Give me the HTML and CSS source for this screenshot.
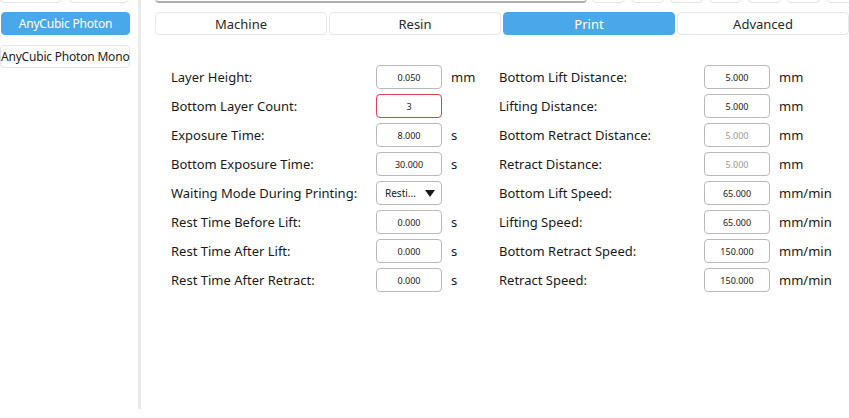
FILE: index.html
```html
<!DOCTYPE html>
<html lang="en">
<head>
    <meta charset="UTF-8">
    <title>Printer Settings</title>
    <link rel="stylesheet" href="styles.css">
</head>
<body>
    <div class="app">
        <div class="sidebar">
            <div class="side-top">
                <span class="stub"></span>
                <span class="stub wide"></span>
            </div>
            <button class="machine active">AnyCubic Photon</button>
            <button class="machine">AnyCubic Photon Mono</button>
        </div>

        <div class="main">
            <div class="toolbar">
                <span class="name-field"></span>
                <span class="tool"></span>
                <span class="tool"></span>
                <span class="tool"></span>
                <span class="tool"></span>
                <span class="tool"></span>
                <span class="tool"></span>
                <span class="tool"></span>
            </div>

            <div class="tabs">
                <button class="tab">Machine</button>
                <button class="tab">Resin</button>
                <button class="tab active">Print</button>
                <button class="tab">Advanced</button>
            </div>

            <div class="form">
                <div class="column">
                    <div class="row"><label>Layer Height:</label><input class="field" value="0.050"><span class="unit">mm</span></div>
                    <div class="row"><label>Bottom Layer Count:</label><input class="field invalid" value="3"><span class="unit"></span></div>
                    <div class="row"><label>Exposure Time:</label><input class="field" value="8.000"><span class="unit">s</span></div>
                    <div class="row"><label>Bottom Exposure Time:</label><input class="field" value="30.000"><span class="unit">s</span></div>
                    <div class="row">
                        <label>Waiting Mode During Printing:</label>
                        <div class="field select">
                            <span>Resti...</span>
                            <svg class="caret" width="10" height="7" viewBox="0 0 10 7"><path d="M0 0 H10 L5 7 Z" fill="#1a1a1a"/></svg>
                        </div>
                        <span class="unit"></span>
                    </div>
                    <div class="row"><label>Rest Time Before Lift:</label><input class="field" value="0.000"><span class="unit">s</span></div>
                    <div class="row"><label>Rest Time After Lift:</label><input class="field" value="0.000"><span class="unit">s</span></div>
                    <div class="row"><label>Rest Time After Retract:</label><input class="field" value="0.000"><span class="unit">s</span></div>
                </div>
                <div class="column">
                    <div class="row"><label>Bottom Lift Distance:</label><input class="field" value="5.000"><span class="unit">mm</span></div>
                    <div class="row"><label>Lifting Distance:</label><input class="field" value="5.000"><span class="unit">mm</span></div>
                    <div class="row"><label>Bottom Retract Distance:</label><input class="field" value="5.000" disabled><span class="unit">mm</span></div>
                    <div class="row"><label>Retract Distance:</label><input class="field" value="5.000" disabled><span class="unit">mm</span></div>
                    <div class="row"><label>Bottom Lift Speed:</label><input class="field" value="65.000"><span class="unit">mm/min</span></div>
                    <div class="row"><label>Lifting Speed:</label><input class="field" value="65.000"><span class="unit">mm/min</span></div>
                    <div class="row"><label>Bottom Retract Speed:</label><input class="field" value="150.000"><span class="unit">mm/min</span></div>
                    <div class="row"><label>Retract Speed:</label><input class="field" value="150.000"><span class="unit">mm/min</span></div>
                </div>
            </div>
        </div>
    </div>
</body>
</html>
```

FILE: styles.css
```css
body {
    margin: 0;
    background: #ffffff;
    font-family: "Noto Sans", "Open Sans", sans-serif;
    color: #1a1a1a;
    overflow: hidden;
}
.app {
    display: flex;
    height: 418px;
}
.sidebar {
    width: 138px;
    flex: none;
    border-right: 3px solid #ebebeb;
    height: 409px;
    display: flex;
    flex-direction: column;
    align-items: flex-start;
}
.side-top {
    display: flex;
    gap: 7px;
    height: 3px;
    margin-bottom: 9px;
    overflow: hidden;
}
.stub {
    width: 60px;
    height: 20px;
    margin-top: -19px;
    border: 1px solid #e3e3e3;
    border-radius: 4px;
}
.stub.wide {
    width: 58px;
}
.machine {
    font-family: inherit;
    font-size: 12px;
    letter-spacing: -0.2px;
    height: 23px;
    padding: 0;
    border: 1px solid #e3e3e3;
    border-radius: 4px;
    background: #ffffff;
    color: #222;
    white-space: nowrap;
    margin-bottom: 10px;
    width: 130px;
}
.machine.active {
    background: #4aa8ea;
    border-color: #4aa8ea;
    color: #ffffff;
    width: 129px;
    margin-left: 1px;
}
.main {
    flex: 1;
    min-width: 0;
    overflow: hidden;
    padding-left: 14px;
}
.toolbar {
    display: flex;
    height: 3px;
    margin-bottom: 9px;
    overflow: hidden;
}
.name-field {
    flex: none;
    width: 430px;
    height: 20px;
    margin-top: -20px;
    border: 1px solid #cfcfcf;
    border-bottom: 2px solid #b0b0b0;
    border-radius: 4px;
    margin-right: 5px;
}
.tool {
    flex: none;
    width: 31px;
    height: 20px;
    margin-top: -19px;
    margin-right: 6px;
    border: 1px solid #e3e3e3;
    border-radius: 4px;
}
.tabs {
    display: grid;
    grid-template-columns: repeat(4, 1fr);
    gap: 2px;
}
.tab {
    font-family: inherit;
    font-size: 13px;
    height: 23px;
    padding: 0;
    border: 1px solid #e6e6e6;
    border-radius: 4px;
    background: #ffffff;
    color: #2a2a2a;
}
.tab.active {
    background: #4aa8ea;
    border-color: #4aa8ea;
    color: #ffffff;
}
.form {
    display: flex;
    padding: 30px 0 0 16px;
}
.column {
    display: flex;
    flex-direction: column;
    gap: 5px;
}
.row {
    display: flex;
    align-items: center;
    height: 24px;
    font-size: 13px;
}
.row label {
    width: 205px;
}
.field {
    box-sizing: border-box;
    width: 66px;
    height: 24px;
    border: 1px solid #b9b9b9;
    border-radius: 4px;
    background: #ffffff;
    font-family: inherit;
    font-size: 9px;
    color: #1a1a1a;
    text-align: center;
    padding: 0;
}
.field:disabled {
    color: #9a9a9a;
    background: #ffffff;
}
.field.invalid {
    border-color: #e0404f;
}
.select {
    display: flex;
    align-items: center;
    justify-content: space-between;
    padding: 0 6px 0 8px;
    font-size: 10px;
}
.caret {
    display: block;
}
.unit {
    width: 57px;
    padding-left: 9px;
    box-sizing: border-box;
}
```
